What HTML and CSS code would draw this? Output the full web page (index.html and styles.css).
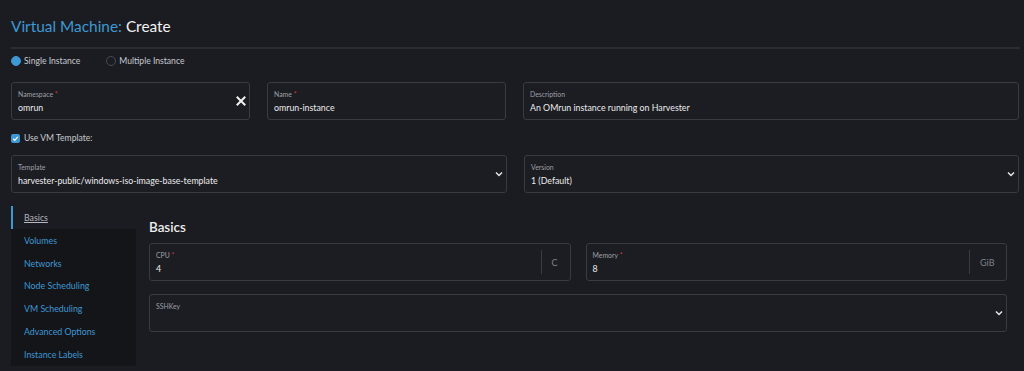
FILE: index.html
```html
<!DOCTYPE html>
<html>
  <head>
    <title>Virtual Machine: Create</title>
    <meta name="viewport" content="width=device-width, initial-scale=1">
    <link rel="stylesheet" href="styles.css">
  </head>
  <body>
    <div class="page">
      <header class="page-header">
        <h1><span class="crumb">Virtual Machine:</span> Create</h1>
      </header>

      <div class="radio-row">
        <label class="radio checked"><span class="dot"></span>Single Instance</label>
        <label class="radio"><span class="dot"></span>Multiple Instance</label>
      </div>

      <div class="field-row three">
        <div class="field">
          <div class="field-body">
            <div class="field-label">Namespace <span class="req">*</span></div>
            <div class="field-value">omrun</div>
          </div>
          <svg class="clear-icon" width="10" height="10" viewBox="0 0 10 10">
            <path d="M1.5 1.5 L8.5 8.5 M8.5 1.5 L1.5 8.5" stroke="#f2f2f2" stroke-width="2" stroke-linecap="square"/>
          </svg>
        </div>
        <div class="field">
          <div class="field-body">
            <div class="field-label">Name <span class="req">*</span></div>
            <div class="field-value">omrun-instance</div>
          </div>
        </div>
        <div class="field wide">
          <div class="field-body">
            <div class="field-label">Description</div>
            <div class="field-value">An OMrun instance running on Harvester</div>
          </div>
        </div>
      </div>

      <div class="check-row">
        <span class="checkbox">
          <svg width="9" height="9" viewBox="0 0 9 9"><path d="M2.2 4.8 L3.8 6.3 L6.8 2.8" fill="none" stroke="#fff" stroke-width="1.2"/></svg>
        </span>
        Use VM Template:
      </div>

      <div class="field-row two">
        <div class="field">
          <div class="field-body">
            <div class="field-label">Template</div>
            <div class="field-value">harvester-public/windows-iso-image-base-template</div>
          </div>
          <svg class="chevron" width="8" height="6" viewBox="0 0 8 6"><path d="M1 1.5 L4 4.5 L7 1.5" fill="none" stroke="#e6e6e6" stroke-width="1.5"/></svg>
        </div>
        <div class="field">
          <div class="field-body">
            <div class="field-label">Version</div>
            <div class="field-value">1 (Default)</div>
          </div>
          <svg class="chevron" width="8" height="6" viewBox="0 0 8 6"><path d="M1 1.5 L4 4.5 L7 1.5" fill="none" stroke="#e6e6e6" stroke-width="1.5"/></svg>
        </div>
      </div>

      <div class="tabs">
        <ul class="tab-list">
          <li class="tab active"><a href="#">Basics</a></li>
          <li class="tab"><a href="#">Volumes</a></li>
          <li class="tab"><a href="#">Networks</a></li>
          <li class="tab"><a href="#">Node Scheduling</a></li>
          <li class="tab"><a href="#">VM Scheduling</a></li>
          <li class="tab"><a href="#">Advanced Options</a></li>
          <li class="tab"><a href="#">Instance Labels</a></li>
        </ul>

        <div class="tab-content">
          <h2>Basics</h2>
          <div class="field-row half">
            <div class="field">
              <div class="field-body">
                <div class="field-label">CPU <span class="req">*</span></div>
                <div class="field-value">4</div>
              </div>
              <div class="unit">C</div>
            </div>
            <div class="field">
              <div class="field-body">
                <div class="field-label">Memory <span class="req">*</span></div>
                <div class="field-value">8</div>
              </div>
              <div class="unit">GiB</div>
            </div>
          </div>
          <div class="field full">
            <div class="field-body">
              <div class="field-label">SSHKey</div>
              <div class="field-value"></div>
            </div>
            <svg class="chevron" width="8" height="6" viewBox="0 0 8 6"><path d="M1 1.5 L4 4.5 L7 1.5" fill="none" stroke="#e6e6e6" stroke-width="1.5"/></svg>
          </div>
        </div>
      </div>
    </div>
  </body>
</html>
```

FILE: styles.css
```css
body {
  margin: 0;
  background-color: #1b1c21;
  color: #e6e6e6;
  font-family: Lato, "Open Sans", sans-serif;
  height: 371px;
  overflow: hidden;
}

.page {
  padding: 0 5px 0 11px;
}

.page-header {
  padding-top: 14px;
  padding-bottom: 9px;
  border-bottom: 2px solid #2c2d33;
  margin-right: -1px;
}

h1 {
  margin: 0;
  font-size: 15.4px;
  line-height: 24px;
  font-weight: 400;
  color: #f2f2f2;
}

.crumb {
  color: #3d98d3;
}

/* radio buttons */
.radio-row {
  display: flex;
  gap: 26px;
  margin-top: 5px;
  height: 14px;
  align-items: center;
  font-size: 8.6px;
  color: #c8cad0;
}

.radio {
  display: flex;
  align-items: center;
  gap: 3px;
}

.dot {
  width: 8px;
  height: 8px;
  border-radius: 50%;
  border: 1px solid #4a4b52;
}

.radio.checked .dot {
  background-color: #3d98d3;
  border-color: #3d98d3;
}

/* inputs */
.field-row {
  display: grid;
  gap: 17px;
}

.field-row.three {
  grid-template-columns: 239px 239px 1fr;
  margin-top: 14px;
}

.field-row.two {
  grid-template-columns: 496px 1fr;
  margin-top: 10px;
}

.field-row.half {
  grid-template-columns: 1fr 1fr;
  gap: 15px;
}

.field {
  display: flex;
  align-items: center;
  height: 38px;
  box-sizing: border-box;
  border: 1px solid #3a3b41;
  border-radius: 3px;
  background-color: #1c1d22;
}

.field-body {
  flex: 1;
  padding: 6px 6px 6px;
  align-self: stretch;
  min-width: 0;
}

.field-label {
  font-size: 6.9px;
  line-height: 10px;
  color: #9c9fa6;
}

.req {
  color: #d43a3a;
}

.field-value {
  margin-top: 2px;
  font-size: 8.8px;
  line-height: 14px;
  color: #ececec;
  white-space: nowrap;
}

.clear-icon {
  margin-right: 3px;
}

.chevron {
  margin-right: 3px;
}

.unit {
  align-self: stretch;
  margin: 6px 0;
  padding: 0 0 0 10px;
  border-left: 1px solid #3a3b41;
  display: flex;
  align-items: center;
  font-size: 9px;
  color: #7e8189;
}

.field .unit:last-child {
  width: 18px;
}

.field-row.half .field:last-child .unit {
  width: 26px;
}

/* checkbox */
.check-row {
  display: flex;
  align-items: center;
  gap: 4px;
  margin-top: 11px;
  height: 14px;
  font-size: 8.6px;
  color: #c8cad0;
}

.checkbox {
  width: 9px;
  height: 9px;
  border-radius: 2px;
  background-color: #3d98d3;
  display: flex;
}

/* tabs */
.tabs {
  display: flex;
  margin-top: 13px;
}

.tab-list {
  list-style: none;
  margin: 0;
  padding: 0;
  width: 125px;
  display: flex;
  flex-direction: column;
}

.tab {
  height: 22.8px;
  display: flex;
  align-items: center;
  padding-left: 13px;
  background-color: #141519;
  font-size: 8.8px;
}

.tab a {
  color: #3d98d3;
  text-decoration: none;
}

.tab.active {
  height: 23px;
  background-color: transparent;
  border-left: 2px solid #3d98d3;
  padding-left: 11px;
}

.tab.active a {
  color: #b4b7be;
  text-decoration: underline;
}

.tab-content {
  flex: 1;
  padding: 0 12px 0 13px;
}

h2 {
  margin: 11px 0 6px;
  font-size: 13.4px;
  line-height: 20px;
  font-weight: 600;
  color: #eeeeee;
}

.field.full {
  margin-top: 13px;
}
```
